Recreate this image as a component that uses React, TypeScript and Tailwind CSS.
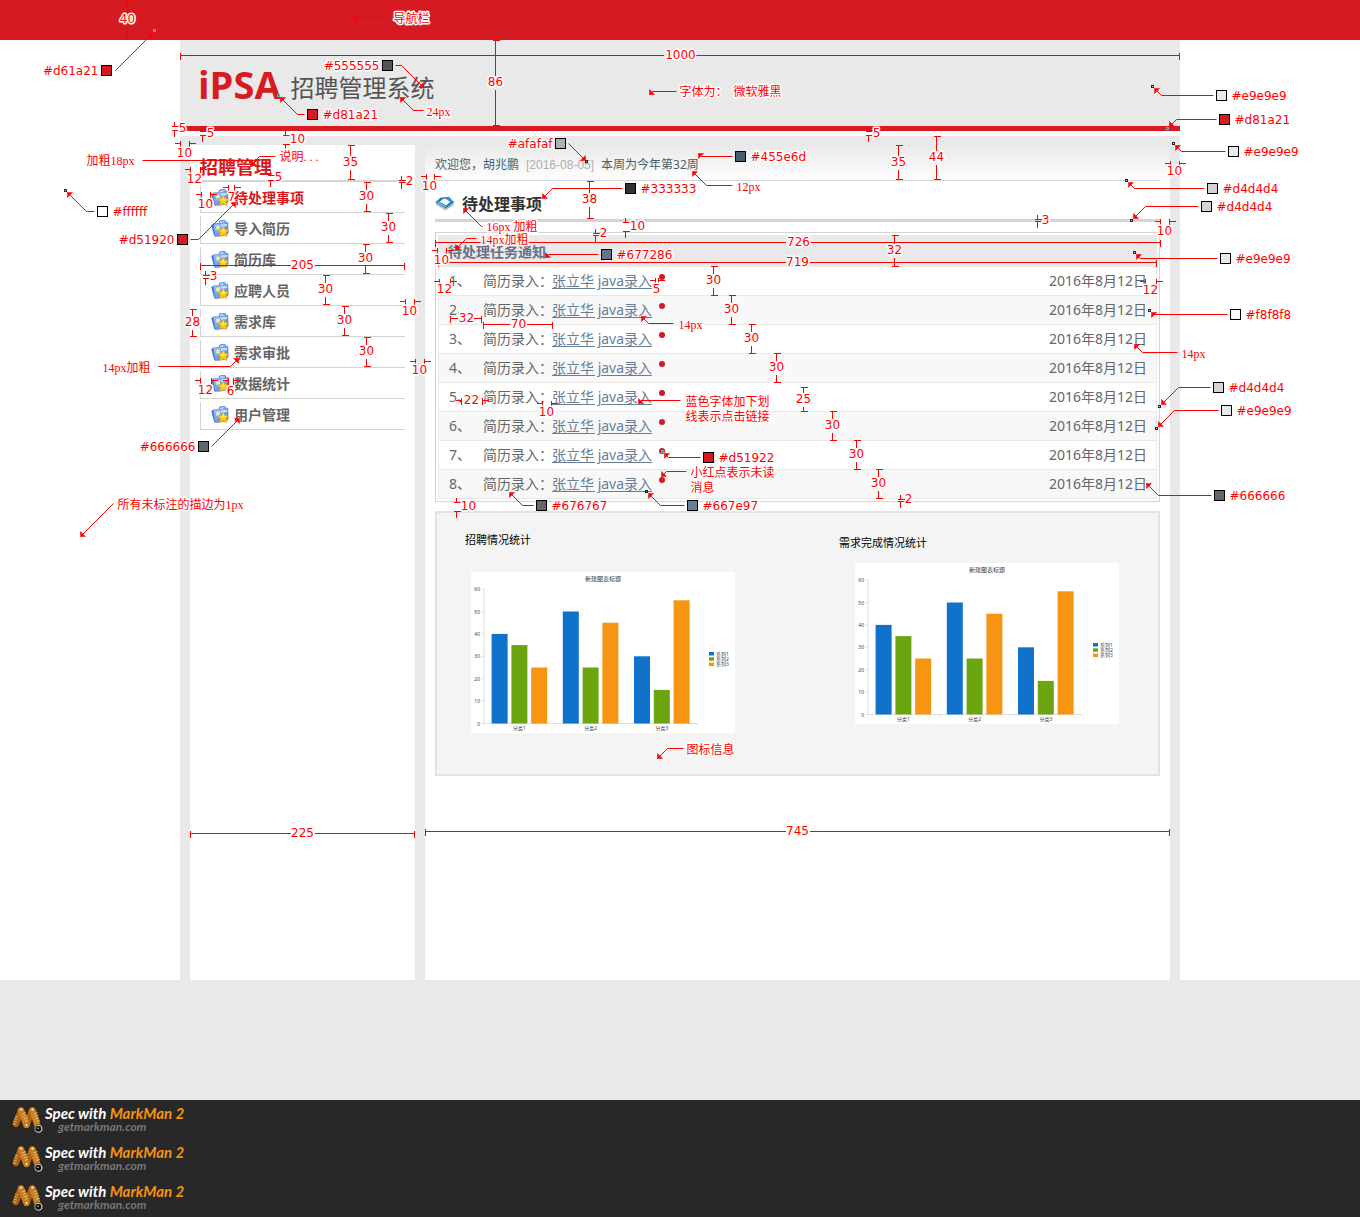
import React from "react";

const MENU = ["待处理事项", "导入简历", "简历库", "应聘人员", "需求库", "需求审批", "数据统计", "用户管理"];
const TASKS = [1, 2, 3, 4, 5, 6, 7, 8];

function FolderStarIcon() {
  return (
    <svg width="18" height="18" viewBox="0 0 18 18" aria-hidden="true" className="shrink-0">
      <defs>
        <linearGradient id="folder" x1="0" y1="0" x2="1" y2="1">
          <stop offset="0" stopColor="#a9cbfa" />
          <stop offset="0.5" stopColor="#74a4f0" />
          <stop offset="1" stopColor="#4678dc" />
        </linearGradient>
      </defs>
      <path d="M8.500 3V1.800L9.500 .9 13.600 .6 14.400 1.400V3" fill="none" stroke="#5a8ee6" strokeWidth="1.200" />
      <path d="M.3 5 3 3.600 4.400 16.400 3 15.400z" fill="#3f72d6" />
      <path d="M2.200 4 16.800 2.200 17.200 12.400 15.500 15.200 4 16.600z" fill="url(#folder)" stroke="#4b7ddc" strokeWidth=".6" />
      <path d="M5 6 8.600 5.300 9 9 5.500 10z" fill="#eee6b8" />
      <path d="M10 4.600 15.800 3.900V6L10 6.800z" fill="#cfe2fd" />
      <path d="M12.300 5.900 14 9.500 17.800 10 15.100 12.700 15.900 16.700 12.300 14.700 8.600 16.900 9.500 12.700 6.600 10.100 10.700 9.500z" fill="#ffcb0a" stroke="#eda400" strokeWidth=".5" />
      <path d="M12.300 7.200 13.300 10 15.600 10.600 12 12 9 10.700 11.200 10.200z" fill="#ffe65c" />
    </svg>
  );
}

function BookIcon() {
  return (
    <svg width="20" height="15" viewBox="0 0 20 15" aria-hidden="true" className="shrink-0">
      <path d="M.5 6.500 9.800 12.200 19 7.200V8.800L10.500 14.600 1 8.800z" fill="#a9bac6" />
      <path d="M.5 6.300 5.400 1.800 13.800.8 19.200 6.200 10.600 12.600z" fill="#1f78b8" />
      <path d="M4.600 5.800 8.600 2.600 13.200 3.400 15.400 6 11 9.600z" fill="#f2f8fc" />
      <path d="M9.600 1.600 13.500 1.200 18 6 15.400 6.200z" fill="#3e96d2" />
      <path d="M2 6.400 4 5.200 9.600 9.800 12 8.800 10.600 11.600z" fill="#74b3dc" />
    </svg>
  );
}

function MarkManLogo() {
  return (
    <svg width="32" height="28" viewBox="0 0 32 28" aria-hidden="true" className="shrink-0">
      <g stroke="#3b1f05" strokeWidth="7.600" strokeLinecap="round">
        <path d="M9 4.500 3.800 18M20 4.500 14.500 18M9 4.500 14.500 19M20.500 4.500 26 21" />
      </g>
      <g strokeWidth="6.400" strokeLinecap="round">
        <path d="M9 4.500 3.800 18M20 4.500 15 18" stroke="#a9641a" />
        <path d="M9 4.500 14.500 19M20.500 4.500 26 21" stroke="#c97f24" />
      </g>
      <g stroke="#f3c77c" strokeWidth=".8">
        <path d="M3 10l3 1M2.200 12.500l3 1M1.600 15l3 1M1 17.500l3 1M10 8l4-1.500M11 10.500l4-1.500M12 13l4-1.500M13 15.500l3-1.500M21.500 8l4-1.500M22.300 10.500l4-1.500M23.100 13l4-1.500M24 15.500l4-1.500" />
      </g>
      <circle cx="9" cy="3.600" r="1.600" fill="#fff0b0" stroke="#9a5a10" strokeWidth=".6" />
      <circle cx="20.500" cy="3.600" r="1.600" fill="#fff0b0" stroke="#9a5a10" strokeWidth=".6" />
      <circle cx="14.500" cy="19" r="1.600" fill="#fff0b0" stroke="#9a5a10" strokeWidth=".6" />
      <circle cx="26.500" cy="22.800" r="4.300" fill="#dcdcdc" stroke="#2a1a0a" strokeWidth=".6" />
      <circle cx="26.300" cy="22.800" r="3" fill="#0c1216" />
      <circle cx="26" cy="22.200" r=".8" fill="#cfe6f0" />
    </svg>
  );
}

const SERIES = [
  { name: "系列1", color: "#1072ca", values: [40, 50, 30] },
  { name: "系列2", color: "#6ba510", values: [35, 25, 15] },
  { name: "系列3", color: "#f79412", values: [25, 45, 55] },
];

function BarChart() {
  const y = (v: number) => 151.5 - v * 2.24;
  return (
    <svg width="264" height="161" viewBox="0 0 264 161" role="img" aria-label="新建图表标题" className="block bg-white font-['Noto_Sans','Noto_Sans_CJK_SC',sans-serif]">
      <text x="132" y="9" fontSize="6" textAnchor="middle" fill="#333">新建图表标题</text>
      <path d="M13 17V151.500H227M84.500 151.500v2M155.500 151.500v2M227 151.500v2" fill="none" stroke="#ddd" />
      {[0, 10, 20, 30, 40, 50, 60].map((v) => (
        <g key={v}>
          <path d={`M11 ${y(v)}H13`} stroke="#ddd" />
          <text x="9" y={y(v) + 2} fontSize="5" textAnchor="end" fill="#444">{v}</text>
        </g>
      ))}
      {SERIES.map((s, i) => (
        <g key={s.name} fill={s.color}>
          {s.values.map((v, g) => (
            <rect key={g} x={20.6 + i * 19.8 + g * 71.2} y={y(v)} width="16" height={v * 2.24} />
          ))}
          <rect x="238" y={80 + i * 5.3} width="5" height="3.500" />
          <text x="245" y={83.5 + i * 5.3} fontSize="5" fill="#444">{s.name}</text>
        </g>
      ))}
      {[1, 2, 3].map((n) => (
        <text key={n} x={48.5 + (n - 1) * 71.2} y="158" fontSize="5" textAnchor="middle" fill="#444">{`分类${n}`}</text>
      ))}
    </svg>
  );
}

/* Long dimensions: the label interrupts the line. [position across, start, end, label] */
const V_DIMS: [number, number, number, string][] = [
  [127, 0, 39, "40"], [495, 40, 125, "86"], [350, 145, 179, "35"],
  [366, 182, 211, "30"], [388, 213, 242, "30"], [365, 244, 273, "30"],
  [325, 275, 304, "30"], [344, 306, 335, "30"], [366, 337, 366, "30"],
  [192, 309, 336, "28"], [898, 145, 179, "35"], [936, 136, 179, "44"],
  [589, 181, 218, "38"], [894, 235, 266, "32"], [713, 266, 295, "30"],
  [731, 295, 324, "30"], [751, 324, 353, "30"], [776, 353, 382, "30"],
  [803, 387, 411, "25"], [832, 411, 440, "30"], [856, 440, 469, "30"], [878, 469, 498, "30"],
];
const H_DIMS: [number, number, number, string][] = [
  [55, 180, 1179, "1000"], [242, 435, 1160, "726"], [262, 438, 1156, "719"],
  [265, 200, 404, "205"], [833, 190, 414, "225"], [831, 425, 1169, "745"],
  [318, 450, 481, "32"], [324, 483, 552, "70"],
];
/* Short dimensions: tails point inwards from outside. [position across, start, end, label, label x, label y] */
const V_GAPS: [number, number, number, string, number, number][] = [
  [174, 126, 130, "5", 183, 128], [202, 131, 135, "5", 211, 133], [285, 135, 144, "10", 298, 139],
  [270, 175, 180, "5", 279, 177], [401, 180, 182, "2", 410, 181], [205, 275, 278, "3", 214, 276],
  [868, 131, 135, "5", 877, 133], [1037, 219, 221, "3", 1046, 220], [625, 222, 231, "10", 638, 226],
  [595, 233, 235, "2", 604, 233], [456, 502, 511, "10", 469, 506], [900, 499, 501, "2", 909, 499],
];
const H_GAPS: [number, number, number, string, number, number][] = [
  [143, 180, 189, "10", 185, 153], [169, 190, 200, "12", 195, 179], [194, 201, 210, "10", 206, 204],
  [187, 228, 234, "7", 232, 197], [176, 426, 434, "10", 430, 186], [301, 405, 414, "10", 410, 311],
  [361, 415, 424, "10", 420, 370], [380, 200, 211, "12", 206, 390], [380, 228, 233, "6", 231, 391],
  [163, 1170, 1179, "10", 1175, 171], [221, 1160, 1169, "10", 1165, 231], [250, 437, 446, "10", 442, 260],
  [281, 439, 450, "12", 445, 289], [281, 1145, 1156, "12", 1151, 290], [280, 655, 658, "5", 657, 289],
  [403, 542, 551, "10", 547, 412], [400, 461, 482, "22", 472, 400],
];

type Point = [number, number];
type Swatch = { c: string; x: number; y: number; left?: boolean; path: Point[]; dot?: Point; cyan?: boolean };
const SWATCHES: Swatch[] = [
  { c: "#d61a21", x: 106, y: 70, left: true, path: [[115, 70], [152, 33]], dot: [154, 30], cyan: true },
  { c: "#555555", x: 387, y: 65, left: true, path: [[395, 65], [401, 65], [423, 87]] },
  { c: "#d81a21", x: 312, y: 114, path: [[304, 114], [297, 114], [280, 97]], dot: [278, 95], cyan: true },
  { c: "#afafaf", x: 560, y: 143, left: true, path: [[568, 143], [585, 160]], dot: [586, 161] },
  { c: "#455e6d", x: 740, y: 156, path: [[732, 156], [701, 156], [698, 153]] },
  { c: "#333333", x: 630, y: 188, path: [[622, 188], [552, 188], [542, 198]] },
  { c: "#677286", x: 606, y: 254, path: [[598, 254], [548, 254], [545, 257]] },
  { c: "#ffffff", x: 102, y: 211, path: [[94, 211], [86, 211], [67, 192]], dot: [65, 190] },
  { c: "#d51920", x: 182, y: 239, left: true, path: [[190, 239], [198, 239], [235, 202]], dot: [236, 200], cyan: true },
  { c: "#666666", x: 203, y: 446, left: true, path: [[211, 446], [239, 418]] },
  { c: "#e9e9e9", x: 1221, y: 95, path: [[1213, 95], [1161, 95], [1154, 88]], dot: [1152, 86] },
  { c: "#d81a21", x: 1224, y: 119, path: [[1216, 119], [1176, 119], [1169, 126]], dot: [1167, 128], cyan: true },
  { c: "#e9e9e9", x: 1233, y: 151, path: [[1225, 151], [1181, 151], [1175, 145]], dot: [1173, 143] },
  { c: "#d4d4d4", x: 1212, y: 188, path: [[1204, 188], [1134, 188], [1128, 182]], dot: [1126, 180] },
  { c: "#d4d4d4", x: 1206, y: 206, path: [[1198, 206], [1145, 206], [1133, 218]], dot: [1131, 220] },
  { c: "#e9e9e9", x: 1225, y: 258, path: [[1217, 258], [1140, 258], [1136, 254]], dot: [1134, 252] },
  { c: "#f8f8f8", x: 1235, y: 314, path: [[1227, 314], [1153, 314], [1151, 312]], dot: [1149, 310] },
  { c: "#d4d4d4", x: 1218, y: 387, path: [[1210, 387], [1178, 387], [1161, 404]], dot: [1159, 406] },
  { c: "#e9e9e9", x: 1226, y: 410, path: [[1218, 410], [1174, 410], [1158, 426]], dot: [1156, 428] },
  { c: "#666666", x: 1219, y: 495, path: [[1211, 495], [1158, 495], [1146, 483]] },
  { c: "#d51922", x: 708, y: 457, path: [[700, 457], [668, 457], [664, 453]], dot: [662, 451], cyan: true },
  { c: "#676767", x: 541, y: 505, path: [[533, 505], [522, 505], [509, 492]] },
  { c: "#667e97", x: 692, y: 505, path: [[684, 505], [660, 505], [648, 493]], dot: [646, 491] },
];

type Note = { x: number; y: number; lines: string[]; path: Point[] };
const NOTES: Note[] = [
  { x: 394, y: 19, lines: ["导航栏"], path: [[390, 17], [356, 17], [353, 20]] },
  { x: 680, y: 92, lines: ["字体为：\u00a0 微软雅黑"], path: [[676, 91], [652, 91], [649, 94]] },
  { x: 427, y: 112, lines: ["24px"], path: [[423, 110], [413, 110], [400, 97]] },
  { x: 87, y: 161, lines: ["加粗18px"], path: [[142, 160], [256, 160], [251, 165]] },
  { x: 280, y: 157, lines: ["说明. . ."], path: [[275, 156], [259, 156], [250, 165]] },
  { x: 737, y: 187, lines: ["12px"], path: [[732, 185], [706, 185], [692, 171]] },
  { x: 487, y: 227, lines: ["16px 加粗"], path: [[482, 226], [481, 226], [463, 208]] },
  { x: 481, y: 240, lines: ["14px加粗"], path: [[476, 238], [466, 238], [455, 249]] },
  { x: 679, y: 325, lines: ["14px"], path: [[673, 323], [648, 323], [641, 316]] },
  { x: 686, y: 402, lines: ["蓝色字体加下划", "线表示点击链接"], path: [[680, 400], [641, 400], [638, 403]] },
  { x: 691, y: 473, lines: ["小红点表示未读", "消息"], path: [[686, 471], [666, 471], [661, 476]] },
  { x: 1182, y: 354, lines: ["14px"], path: [[1177, 352], [1142, 352], [1134, 344]] },
  { x: 103, y: 368, lines: ["14px加粗"], path: [[158, 366], [230, 366], [238, 358]] },
  { x: 118, y: 505, lines: ["所有未标注的描边为1px"], path: [[113, 503], [80, 536]] },
  { x: 687, y: 750, lines: ["图标信息"], path: [[683, 748], [667, 748], [657, 758]] },
];

function Leader({ path }: { path: Point[] }) {
  const [x, y] = path[path.length - 1];
  const [px, py] = path[path.length - 2];
  const sx = Math.sign(px - x) * 5;
  const sy = Math.sign(py - y) * 5;
  return (
    <>
      <polyline points={path.map((p) => p.join(",")).join(" ")} fill="none" stroke="#f00" />
      <path d={`M${x} ${y}h${sx}L${x} ${y + sy}z`} fill="#f00" stroke="#f00" strokeWidth=".5" />
    </>
  );
}

const HALO = "fill-[#ff0000] stroke-white [paint-order:stroke] [stroke-width:3px] [stroke-linejoin:round]";
const MARK = `${HALO} text-[12px] font-['DejaVu_Sans',sans-serif]`;
const NOTE = `${HALO} text-[12px] font-['Liberation_Serif','Noto_Sans_CJK_SC',serif]`;

function Annotations() {
  return (
    <svg width="1360" height="1100" viewBox="-0.5 -0.5 1360 1100" className="pointer-events-none absolute left-1/2 top-0 max-w-none -translate-x-1/2">
      <g stroke="#f00" fill="none" shapeRendering="crispEdges">
        {V_DIMS.map(([x, a, b], i) => {
          const m = Math.floor((a + b) / 2) - 1;
          return <path key={i} d={`M${x - 3} ${a}h7M${x} ${a}V${m - 6}M${x} ${m + 8}V${b}M${x - 3} ${b}h7`} />;
        })}
        {H_DIMS.map(([y, a, b, t], i) => {
          const m = (a + b) / 2;
          const w = t.length * 4;
          return <path key={i} d={`M${a} ${y - 3}v7M${a} ${y}H${m - w}M${m + w} ${y}H${b}M${b} ${y - 3}v7`} />;
        })}
        {V_GAPS.map(([x, a, b], i) => (
          <path key={i} d={`M${x} ${a - 5}V${a}M${x - 3} ${a}h7M${x - 3} ${b}h7M${x} ${b}v6`} />
        ))}
        {H_GAPS.map(([y, a, b], i) => (
          <path key={i} d={`M${a - 6} ${y}H${a}M${a} ${y - 3}v7M${b} ${y - 3}v7M${b} ${y}h6`} />
        ))}
      </g>
      {SWATCHES.map((s, i) => (
        <g key={i}>
          <Leader path={s.path} />
          {s.dot && <rect x={s.dot[0] - 1} y={s.dot[1] - 1} width="2" height="2" fill={s.c} stroke={s.cyan ? "#3cc" : "#222"} />}
          <rect x={s.x - 5} y={s.y - 5} width="10" height="10" fill={s.c} stroke="#000" />
          <text x={s.left ? s.x - 8 : s.x + 10} y={s.y + 4} textAnchor={s.left ? "end" : "start"} className={MARK}>{s.c}</text>
        </g>
      ))}
      {NOTES.map((n, i) => (
        <g key={i}>
          <Leader path={n.path} />
          {n.lines.map((line, k) => (
            <text key={k} x={n.x - 1} y={n.y + 3 + k * 15} className={NOTE}>{line}</text>
          ))}
        </g>
      ))}
      <g textAnchor="middle" className={MARK}>
        {V_DIMS.map(([x, a, b, t], i) => (
          <text key={i} x={x} y={Math.floor((a + b) / 2) + 3}>{t}</text>
        ))}
        {H_DIMS.map(([y, a, b, t], i) => (
          <text key={i} x={Math.round((a + b) / 2)} y={y + 3}>{t}</text>
        ))}
        {[...V_GAPS, ...H_GAPS].map(([, , , t, x, y], i) => (
          <text key={i} x={x - 1} y={y + 3}>{t}</text>
        ))}
      </g>
    </svg>
  );
}

export default function App() {
  return (
    <div className="relative overflow-hidden bg-white font-['Noto_Sans','Noto_Sans_CJK_SC',sans-serif]">
      <div className="h-10 bg-[#d61a21]" />

      <div className="mx-auto w-full max-w-[1000px]">
        <header className="flex h-[91px] items-center gap-[10px] border-b-[5px] border-[#d81a21] bg-[#e9e9e9] pl-[18px]">
          <span className="pt-[2px] font-['Open_Sans',sans-serif] text-[38px] font-bold leading-none text-[#d81a21]">iPSA</span>
          <h1 className="pt-[10px] text-[24px] leading-[30px] text-[#555555]">招聘管理系统</h1>
        </header>

        <div className="mt-[5px] flex min-h-[844px] gap-[10px] bg-[#e9e9e9] px-[10px]">
          <aside className="mt-[9px] w-[225px] shrink-0 bg-white px-[10px]">
            <h2 className="flex h-[37px] items-center border-b-2 border-[#d4d4d4] pt-[10px] text-[18px] font-bold text-[#d51920]">招聘管理</h2>
            <nav>
              <ul>
                {MENU.map((item, i) => (
                  <li key={item} className="pt-[3px]">
                    <a
                      href="#"
                      className={`flex h-7 items-center gap-[5px] border-b border-l border-[#d4d4d4] pb-[2px] pl-[10px] text-[14px] font-bold ${i === 0 ? "text-[#d51920]" : "text-[#666666]"}`}
                    >
                      <FolderStarIcon />
                      {item}
                    </a>
                  </li>
                ))}
              </ul>
            </nav>
          </aside>

          <main className="min-w-0 flex-1 bg-white">
            <div className="bg-gradient-to-b from-[#e9e9e9] from-20% to-white px-[10px]">
              <p className="flex h-[45px] items-center gap-[7px] border-b border-[#d4d4d4] pt-[14px] text-[12px] text-[#455e6d]">
                <span>欢迎您，胡兆鹏</span>
                <time className="font-['Liberation_Sans',sans-serif] text-[#afafaf]">[2016-08-05]</time>
                <span>本周为今年第32周</span>
              </p>
            </div>

            <div className="px-[10px]">
              <h2 className="flex h-[41px] items-center gap-[7px] border-b-[3px] border-[#d4d4d4] pt-[7px] text-[16px] font-bold text-[#333333]">
                <BookIcon />
                待处理事项
              </h2>

              <section className="mt-[10px] border border-[#d4d4d4] p-[2px]">
                <div className="border-x border-[#e9e9e9]">
                  <h3 className="flex h-8 items-center bg-[#e9e9e9] pl-[9px] text-[14px] font-bold text-[#677286]">待处理任务通知</h3>
                  <ul>
                    {TASKS.map((n) => (
                      <li key={n} className="flex h-[29px] items-center border-b border-[#e9e9e9] pl-[10px] pr-[9px] text-[14px] leading-5 text-[#666666] even:bg-[#f8f8f8]">
                        <span className="w-[34px]">{n}、</span>
                        <span className="w-[69px] whitespace-nowrap">简历录入：</span>
                        <a href="#" className="text-[#667e97] underline underline-offset-2">张立华 java录入</a>
                        <span className="ml-[7px] mt-[7px] size-[6px] self-start rounded-full bg-[#d51922]" />
                        <time className="ml-auto">2016年8月12日</time>
                      </li>
                    ))}
                  </ul>
                </div>
              </section>

              <section className="mt-[9px] flex min-h-[265px] gap-[104px] border-2 border-[#e2e2e2] bg-[#f4f4f4] pl-7">
                <figure className="pt-[19px]">
                  <figcaption className="text-[11px] leading-4 text-black">招聘情况统计</figcaption>
                  <div className="ml-[6px] mt-6">
                    <BarChart />
                  </div>
                </figure>
                <figure className="pt-[22px]">
                  <figcaption className="text-[11px] leading-4 text-black">需求完成情况统计</figcaption>
                  <div className="ml-4 mt-3">
                    <BarChart />
                  </div>
                </figure>
              </section>
            </div>
          </main>
        </div>
      </div>

      <div className="h-[120px] bg-[#e9e9e9]" />

      <footer className="bg-[#282828] pl-3">
        {[1, 2, 3].map((n) => (
          <div key={n} className="flex h-[39px] items-start gap-[1px] pt-[6px] font-['Lato',sans-serif] font-bold italic">
            <MarkManLogo />
            <p className="text-[15px] leading-[15px] text-white">
              Spec with <span className="text-[#f7930a]">MarkMan 2</span>
              <a href="#" className="block pl-[13px] text-[12px] leading-[11px] text-[#777777]">getmarkman.com</a>
            </p>
          </div>
        ))}
      </footer>

      <Annotations />
    </div>
  );
}
